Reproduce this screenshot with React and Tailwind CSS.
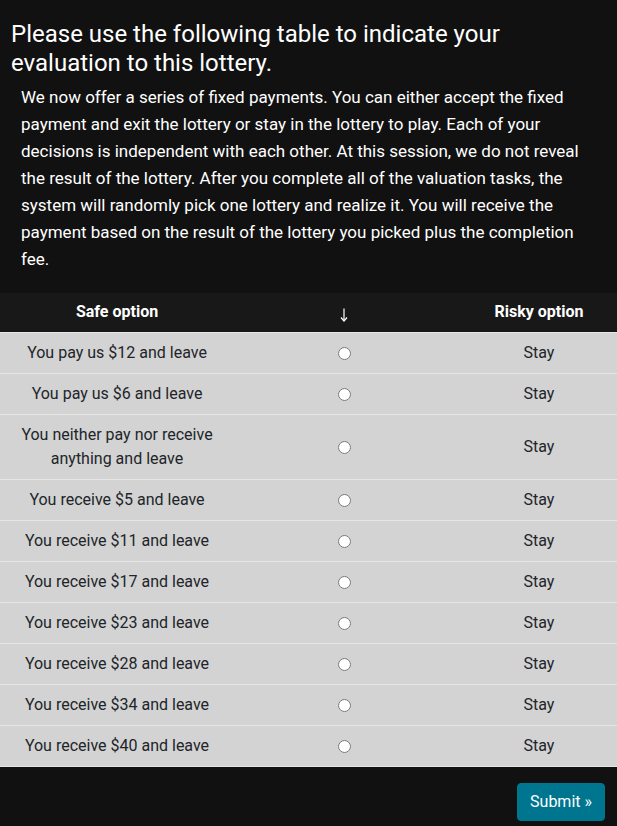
import React from "react";

const rows = [
  "You pay us $12 and leave",
  "You pay us $6 and leave",
  "You neither pay nor receive anything and leave",
  "You receive $5 and leave",
  "You receive $11 and leave",
  "You receive $17 and leave",
  "You receive $23 and leave",
  "You receive $28 and leave",
  "You receive $34 and leave",
  "You receive $40 and leave",
];

export default function App() {
  return (
    <div
      className="relative min-h-screen bg-[#111111] text-white overflow-hidden"
      style={{ fontFamily: "Roboto, 'Liberation Sans', sans-serif" }}
    >
      {/* close button, mostly off the top edge */}
      <span className="absolute right-[13px] -top-[17px] text-[22px] leading-none text-[#999]">×</span>

      <h2 className="px-[11px] pt-[20px] text-[24px] leading-[29px] font-normal">
        Please use the following table to indicate your evaluation to this lottery.
      </h2>

      <p className="mt-[6px] pl-[21px] pr-[24px] text-[17px] leading-[27px]">
        We now offer a series of fixed payments. You can either accept the fixed payment and exit
        the lottery or stay in the lottery to play. Each of your decisions is independent with each
        other. At this session, we do not reveal the result of the lottery. After you complete all
        of the valuation tasks, the system will randomly pick one lottery and realize it. You will
        receive the payment based on the result of the lottery you picked plus the completion fee.
      </p>

      <div className="mt-[20px]">
        <div className="grid grid-cols-[234px_220px_163px] bg-[#181818] border-b border-[#e6e6e6] h-[40px] items-center text-[16px] font-bold">
          <div className="text-center pb-[2px]">Safe option</div>
          <div className="flex justify-center pt-[4px]">
            <svg width="8" height="14" viewBox="0 0 8 14" fill="none" stroke="white" strokeWidth="1.2">
              <path d="M4 0.5 V13" />
              <path d="M1 9.5 L4 13 L7 9.5" />
            </svg>
          </div>
          <div className="text-center pl-[7px] pb-[2px]">Risky option</div>
        </div>
        {rows.map((r, i) => (
          <div
            key={i}
            className="grid grid-cols-[234px_220px_163px] items-center bg-[#d3d3d3] border-b border-[#e6e6e6] text-[#212529] text-[16px] leading-[24px]"
          >
            <div className="py-2 px-[20px] text-center">{r}</div>
            <div className="flex justify-center">
              <input type="radio" name="choice" className="w-[13px] h-[13px] m-0" />
            </div>
            <div className="text-center pl-[7px]">Stay</div>
          </div>
        ))}
      </div>

      <div className="flex justify-end pr-[12px] pt-[16px]">
        <button className="bg-[#00758f] text-white text-[16px] leading-[24px] px-[12px] py-[6px] rounded-[4px] border border-[#00758f]">
          Submit »
        </button>
      </div>
    </div>
  );
}
